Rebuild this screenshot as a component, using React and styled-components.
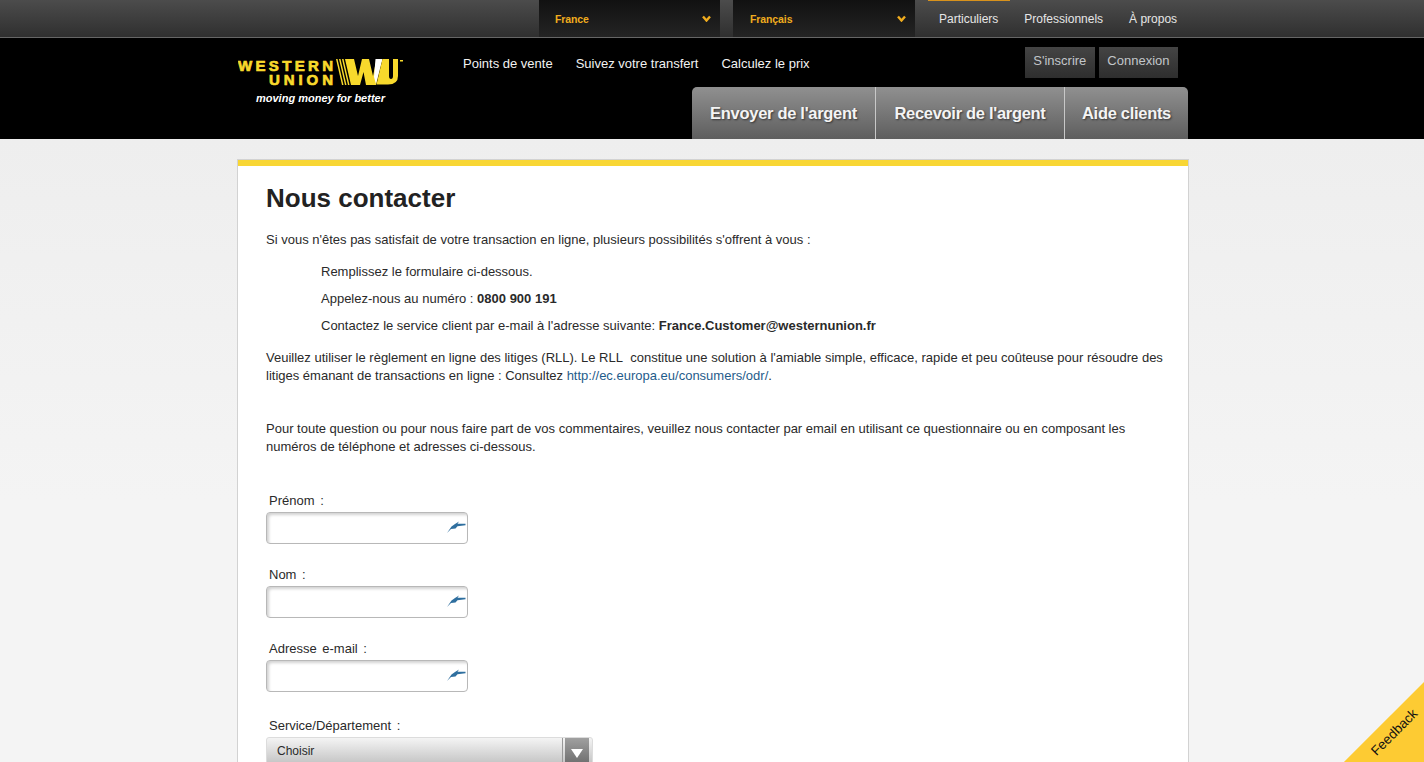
import React from 'react';
import styled, { createGlobalStyle } from 'styled-components';

const GlobalStyle = createGlobalStyle`
  html, body {
    margin: 0;
    padding: 0;
    height: 100%;
    overflow: hidden;
    background: #f2f2f2;
    font-family: "Liberation Sans", Arial, sans-serif;
  }
`;

const Page = styled.div`
  position: relative;
  height: 762px;
  overflow: hidden;
  background: linear-gradient(to bottom, #eeeeee 139px, #f4f4f4 500px);
`;

const TopBar = styled.div`
  height: 37px;
  border-bottom: 1px solid #666;
  background: linear-gradient(to bottom, #4c4c4c, #2f2f2f);
`;

const TopInner = styled.div`
  width: 952px;
  height: 37px;
  margin-left: 237px;
  padding-left: 302px;
  box-sizing: border-box;
  display: flex;
`;

const Dropdown = styled.div`
  width: ${p => p.$w}px;
  height: 37px;
  margin-right: ${p => p.$mr}px;
  padding: 0 9px 0 ${p => p.$pl}px;
  box-sizing: border-box;
  display: flex;
  align-items: center;
  justify-content: space-between;
  background: linear-gradient(to bottom, #111, #242424);
  color: #f0ac1e;
  font-size: 10.5px;
  font-weight: bold;
  letter-spacing: -0.1px;
`;

const TopNav = styled.nav`
  display: flex;
  gap: 26px;
  padding-left: 24px;
`;

const TopLink = styled.a`
  position: relative;
  height: 37px;
  line-height: 39px;
  color: #e6e6e6;
  font-size: 12px;
  &::before {
    content: ${p => (p.$active ? '""' : 'none')};
    position: absolute;
    top: 0;
    left: -11px;
    right: -12px;
    height: 1px;
    background: #d8921c;
  }
`;

const Header = styled.header`
  height: 101px;
  background: #000;
`;

const HeaderInner = styled.div`
  width: 952px;
  height: 101px;
  margin-left: 237px;
  display: flex;
`;

const LogoWrap = styled.div`
  width: 226px;
  padding: 20px 0 0 1px;
  box-sizing: border-box;
  svg {
    display: block;
  }
`;

const Tagline = styled.div`
  margin: 4px 0 0 18px;
  color: #fff;
  font-size: 11px;
  line-height: 13px;
  font-weight: bold;
  font-style: italic;
`;

const HeaderRight = styled.div`
  flex: 1;
  display: flex;
  flex-direction: column;
  padding-right: 1px;
`;

const HeaderRow = styled.div`
  height: 49px;
  display: flex;
  justify-content: space-between;
  padding-right: 10px;
`;

const MainLinks = styled.div`
  display: flex;
  gap: 23px;
  padding-top: 18px;
`;

const MainLink = styled.a`
  color: #f2f2f2;
  font-size: 13px;
  line-height: 15px;
`;

const AuthButtons = styled.div`
  display: flex;
  gap: 4px;
  padding-top: 9px;
`;

const AuthButton = styled.a`
  height: 31px;
  padding: 0 8.5px;
  line-height: 28px;
  background: linear-gradient(to bottom, #444, #2e2e2e);
  color: #c2c6ca;
  font-size: 13px;
`;

const Tabs = styled.div`
  display: flex;
  justify-content: flex-end;
`;

const Tab = styled.a`
  width: ${p => p.$w}px;
  height: 52px;
  box-sizing: border-box;
  border-left: ${p => (p.$first ? 'none' : '1px solid #c8c8c8')};
  border-radius: ${p => p.$radius};
  background: linear-gradient(to bottom, #909090, #5e5e5e);
  color: #f4f4f4;
  font-size: 16.5px;
  font-weight: bold;
  line-height: 52px;
  text-align: center;
  letter-spacing: -0.3px;
  text-shadow: 1px 1px 2px rgba(0, 0, 0, 0.55);
`;

const Card = styled.main`
  width: 952px;
  height: 700px;
  margin: 20px 0 0 237px;
  padding: 0 24px 0 28px;
  box-sizing: border-box;
  background: #fff;
  border: 1px solid #d2d2d2;
  box-shadow: inset 0 6px 0 #f8d634;
  color: #2a2a2a;
  overflow: hidden;
`;

const Title = styled.h1`
  margin: 21px 0 16px;
  font-size: 26px;
  line-height: 34px;
  font-weight: bold;
  color: #222;
`;

const Para = styled.p`
  margin: 0 0 ${p => p.$mb || 0}px;
  font-size: 13px;
  line-height: 18px;
`;

const Indented = styled.div`
  padding-left: 55px;
  display: flex;
  flex-direction: column;
  gap: 9px;
  margin-bottom: 14px;
`;

const Link = styled.a`
  color: #1f5c8b;
`;

const Form = styled.form`
  display: flex;
  flex-direction: column;
`;

const Field = styled.div`
  height: ${p => p.$h || 74}px;
`;

const Label = styled.label`
  display: block;
  padding-left: 3px;
  height: 20px;
  line-height: 18px;
  font-size: 13px;
  word-spacing: 2px;
`;

const InputBox = styled.div`
  position: relative;
  width: 202px;
  height: 32px;
  box-sizing: border-box;
  border: 1px solid #b8b8b8;
  border-radius: 4px;
  background: #fff;
  box-shadow: inset 2px 2px 3px rgba(0, 0, 0, 0.18);
`;

const RunnerIcon = styled.svg`
  position: absolute;
  right: 1px;
  top: 6px;
  width: 20px;
  height: 15px;
`;

const Select = styled.div`
  width: 327px;
  height: 32px;
  box-sizing: border-box;
  padding-left: 10px;
  display: flex;
  justify-content: space-between;
  border: 1px solid #dcdcdc;
  border-radius: 3px;
  background: linear-gradient(to bottom, #f4f4f4, #bcbcbc);
  font-size: 12px;
  line-height: 26px;
`;

const SelectTrack = styled.div`
  padding: 0 3px 0 2px;
  border-left: 1px solid #999;
`;

const SelectArrow = styled.div`
  width: 24px;
  height: 30px;
  display: flex;
  justify-content: center;
  padding-top: 11px;
  box-sizing: border-box;
  background: linear-gradient(to bottom, #a0a0a0, #666);
  &::after {
    content: "";
    width: 0;
    height: 0;
    border-left: 6px solid transparent;
    border-right: 6px solid transparent;
    border-top: 9px solid #fff;
  }
`;

const Feedback = styled.div`
  position: absolute;
  right: -88px;
  bottom: -88px;
  width: 150px;
  height: 150px;
  transform: rotate(-45deg);
  background: #fdcb33;
  font-size: 13.5px;
  color: #111;
  text-align: center;
  line-height: 18px;
  padding-top: 6px;
  box-sizing: border-box;
`;

const Chevron = () => (
  <svg width="9" height="7" viewBox="0 0 9 7">
    <path d="M1 1.5 L4.5 5.5 L8 1.5" fill="none" stroke="#f0ac1e" strokeWidth="2.4" />
  </svg>
);

const Runner = () => (
  <RunnerIcon viewBox="0 0 20 15">
    <path d="M1 14 L5.5 7.5 L9 5 L13 2.5 L11.5 4.8 L19.5 4.8 L19.5 6.2 L11.5 7.2 L9.5 9.5 L5 10 Z" fill="#2f6f9f" />
  </RunnerIcon>
);

const Logo = () => (
  <svg width="166" height="30" viewBox="0 0 166 30">
    <g fill="#f8d92c" fontFamily="'Liberation Sans', sans-serif" fontWeight="bold">
      <text x="0" y="12.5" fontSize="15" textLength="95" stroke="#f8d92c" strokeWidth="0.7">WESTERN</text>
      <text x="31" y="26.5" fontSize="15" textLength="64" stroke="#f8d92c" strokeWidth="0.7">UNION</text>
      <polygon points="98,1 99.5,1 105.5,27 104,27" />
      <polygon points="101,1 102.5,1 108.5,27 107,27" />
      <polygon points="104,1 105.5,1 111.5,27 110,27" />
      <polygon points="107,1 116,1 120,18 124,1 131,1 135,18 138.5,1 144,1 138,27 128,27 125.5,14 122,27 113,27" />
      <polygon points="137.5,1 144.5,1 138,26 136,19" fill="#fff" />
      <path d="M144.5 1 H151 V18 Q151 21 153 21 Q155 21 155 18 V1 H160 V18 Q160 26.5 150 26.5 H138.5 Z" />
      <rect x="162" y="2" width="3" height="1.5" />
    </g>
  </svg>
);

export default function App() {
  return (
    <Page>
      <GlobalStyle />
      <TopBar>
        <TopInner>
          <Dropdown $w={181} $mr={13} $pl={16}>France <Chevron /></Dropdown>
          <Dropdown $w={182} $mr={0} $pl={17}>Français <Chevron /></Dropdown>
          <TopNav>
            <TopLink $active>Particuliers</TopLink>
            <TopLink>Professionnels</TopLink>
            <TopLink>À propos</TopLink>
          </TopNav>
        </TopInner>
      </TopBar>
      <Header>
        <HeaderInner>
          <LogoWrap>
            <Logo />
            <Tagline>moving money for better</Tagline>
          </LogoWrap>
          <HeaderRight>
            <HeaderRow>
              <MainLinks>
                <MainLink>Points de vente</MainLink>
                <MainLink>Suivez votre transfert</MainLink>
                <MainLink>Calculez le prix</MainLink>
              </MainLinks>
              <AuthButtons>
                <AuthButton>S'inscrire</AuthButton>
                <AuthButton>Connexion</AuthButton>
              </AuthButtons>
            </HeaderRow>
            <Tabs>
              <Tab $first $w={183} $radius="5px 0 0 0">Envoyer de l'argent</Tab>
              <Tab $w={189} $radius="0">Recevoir de l'argent</Tab>
              <Tab $w={124} $radius="0 5px 0 0">Aide clients</Tab>
            </Tabs>
          </HeaderRight>
        </HeaderInner>
      </Header>
      <Card>
        <Title>Nous contacter</Title>
        <Para $mb={14}>Si vous n'êtes pas satisfait de votre transaction en ligne, plusieurs possibilités s'offrent à vous :</Para>
        <Indented>
          <Para>Remplissez le formulaire ci-dessous.</Para>
          <Para>Appelez-nous au numéro : <b>0800 900 191</b></Para>
          <Para>Contactez le service client par e-mail à l'adresse suivante: <b>France.Customer@westernunion.fr</b></Para>
        </Indented>
        <Para $mb={35}>
          Veuillez utiliser le règlement en ligne des litiges (RLL). Le RLL&nbsp; constitue une solution à l'amiable simple, efficace, rapide et peu coûteuse pour résoudre des litiges émanant de transactions en ligne : Consultez <Link>http://ec.europa.eu/consumers/odr/</Link>.
        </Para>
        <Para $mb={36}>
          Pour toute question ou pour nous faire part de vos commentaires, veuillez nous contacter par email en utilisant ce questionnaire ou en composant les numéros de téléphone et adresses ci-dessous.
        </Para>
        <Form>
          <Field>
            <Label>Prénom :</Label>
            <InputBox><Runner /></InputBox>
          </Field>
          <Field>
            <Label>Nom :</Label>
            <InputBox><Runner /></InputBox>
          </Field>
          <Field $h={77}>
            <Label>Adresse e-mail :</Label>
            <InputBox><Runner /></InputBox>
          </Field>
          <Field>
            <Label>Service/Département :</Label>
            <Select>Choisir<SelectTrack><SelectArrow /></SelectTrack></Select>
          </Field>
        </Form>
      </Card>
      <Feedback>Feedback</Feedback>
    </Page>
  );
}
